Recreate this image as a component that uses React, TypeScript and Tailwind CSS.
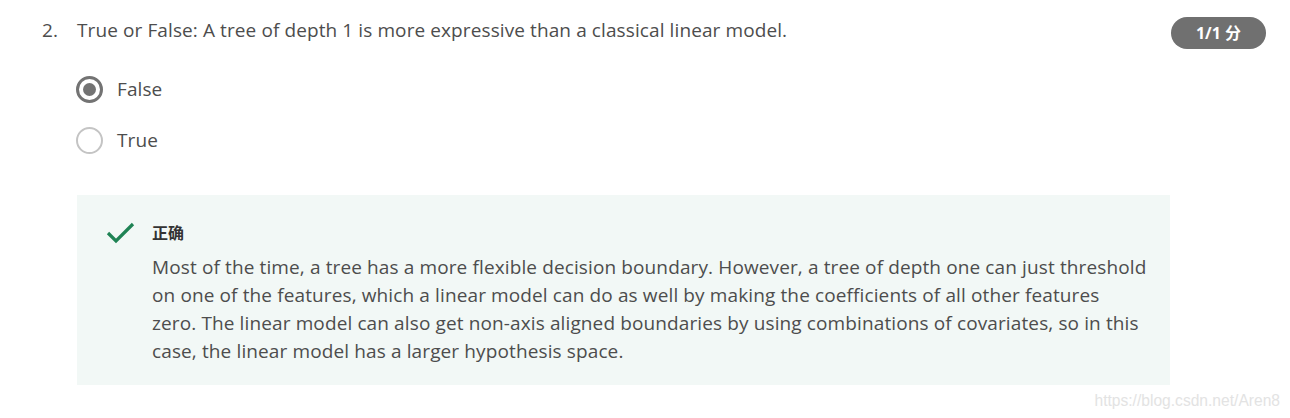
export default function App() {
  return (
    <div className="w-[1290px] h-[418px] bg-white relative font-['Open_Sans',sans-serif] text-[#4d4d4d] overflow-hidden">
      <div className="flex items-start pt-[16px] pl-[42px] pr-[24px]">
        <div className="flex-1">
          <div className="flex text-[19px] leading-[28px] tracking-[0.1px]">
            <span className="w-[35px]">2.</span>
            <span>True or False: A tree of depth 1 is more expressive than a classical linear model.</span>
          </div>
          <div className="flex flex-col gap-[24px] mt-[32px] ml-[34px]">
            <label className="flex items-center gap-[14px] text-[19px] leading-[27px] tracking-[0.1px]">
              <span className="w-[27px] h-[27px] rounded-full border-[3px] border-[#737373] flex items-center justify-center">
                <span className="w-[13px] h-[13px] rounded-full bg-[#737373]" />
              </span>
              <span>False</span>
            </label>
            <label className="flex items-center gap-[14px] text-[19px] leading-[27px] tracking-[0.1px]">
              <span className="w-[27px] h-[27px] rounded-full border-2 border-[#c4c4c4]" />
              <span>True</span>
            </label>
          </div>
        </div>
        <div className="h-[32px] mt-[1px] px-[25px] rounded-full bg-[#707070] text-white text-[16px] font-bold flex items-center font-['Open_Sans','Noto_Sans_CJK_SC',sans-serif]">
          1/1 分
        </div>
      </div>
      <div className="mt-[41px] ml-[77px] w-[1093px] h-[190px] bg-[#f2f8f6] flex pl-[28px] pt-[25px]">
        <svg width="32" height="28" viewBox="0 0 32 28" className="mt-[-1px] shrink-0">
          <path d="M3 14 L11 22 L28 5" fill="none" stroke="#1f8354" strokeWidth="3.2" />
        </svg>
        <div className="ml-[15px]">
          <div className="text-[16px] font-bold text-[#333] leading-[24px] font-['Noto_Sans_CJK_SC',sans-serif]">正确</div>
          <p className="mt-[9px] text-[19px] leading-[28px] tracking-[0.12px] text-[#4d4d4d] whitespace-nowrap">
            Most of the time, a tree has a more flexible decision boundary. However, a tree of depth one can just threshold
            <br />
            on one of the features, which a linear model can do as well by making the coefficients of all other features
            <br />
            zero. The linear model can also get non-axis aligned boundaries by using combinations of covariates, so in this
            <br />
            case, the linear model has a larger hypothesis space.
          </p>
        </div>
      </div>
      <div className="absolute right-[10px] bottom-[6px] text-[15.6px] text-[#e3e3e3] font-['Liberation_Sans',sans-serif]">
        https://blog.csdn.net/Aren8
      </div>
    </div>
  );
}
